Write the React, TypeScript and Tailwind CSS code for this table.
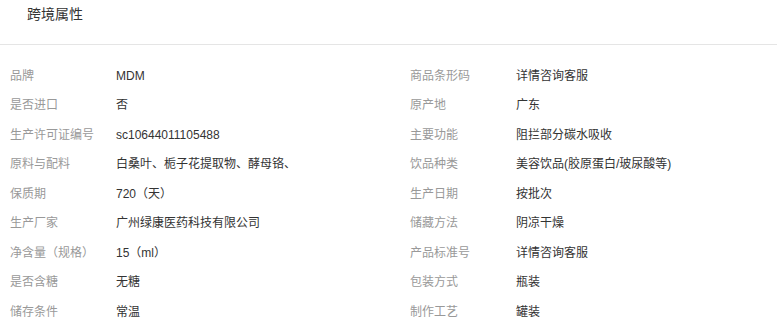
const rows: [string, string, string, string][] = [
  ['品牌', 'MDM', '商品条形码', '详情咨询客服'],
  ['是否进口', '否', '原产地', '广东'],
  ['生产许可证编号', 'sc10644011105488', '主要功能', '阻拦部分碳水吸收'],
  ['原料与配料', '白桑叶、栀子花提取物、酵母铬、', '饮品种类', '美容饮品(胶原蛋白/玻尿酸等)'],
  ['保质期', '720（天）', '生产日期', '按批次'],
  ['生产厂家', '广州绿康医药科技有限公司', '储藏方法', '阴凉干燥'],
  ['净含量（规格）', '15（ml）', '产品标准号', '详情咨询客服'],
  ['是否含糖', '无糖', '包装方式', '瓶装'],
  ['储存条件', '常温', '制作工艺', '罐装'],
];

function Cell({ label, value }: { label: string; value: string }) {
  return (
    <div className="flex w-[400px] shrink-0 items-center">
      <span className="w-[106px] shrink-0 text-[#999]">{label}</span>
      <span className="whitespace-nowrap text-[#333]">{value}</span>
    </div>
  );
}

export default function App() {
  return (
    <div
      className="min-h-screen overflow-hidden bg-white"
      style={{ fontFamily: '"Liberation Sans", Arial, "Noto Sans CJK SC", sans-serif' }}
    >
      <div className="h-[45px] border-b border-[#e5e5e5] pl-[27px] pt-[5px] text-[14px] leading-[18px] text-[#333]">
        跨境属性
      </div>
      <div className="px-[10px] pt-[16px] text-[12px]">
        {rows.map((r, i) => (
          <div key={i} className="flex h-[29.5px] items-center">
            <Cell label={r[0]} value={r[1]} />
            <Cell label={r[2]} value={r[3]} />
          </div>
        ))}
      </div>
    </div>
  );
}
